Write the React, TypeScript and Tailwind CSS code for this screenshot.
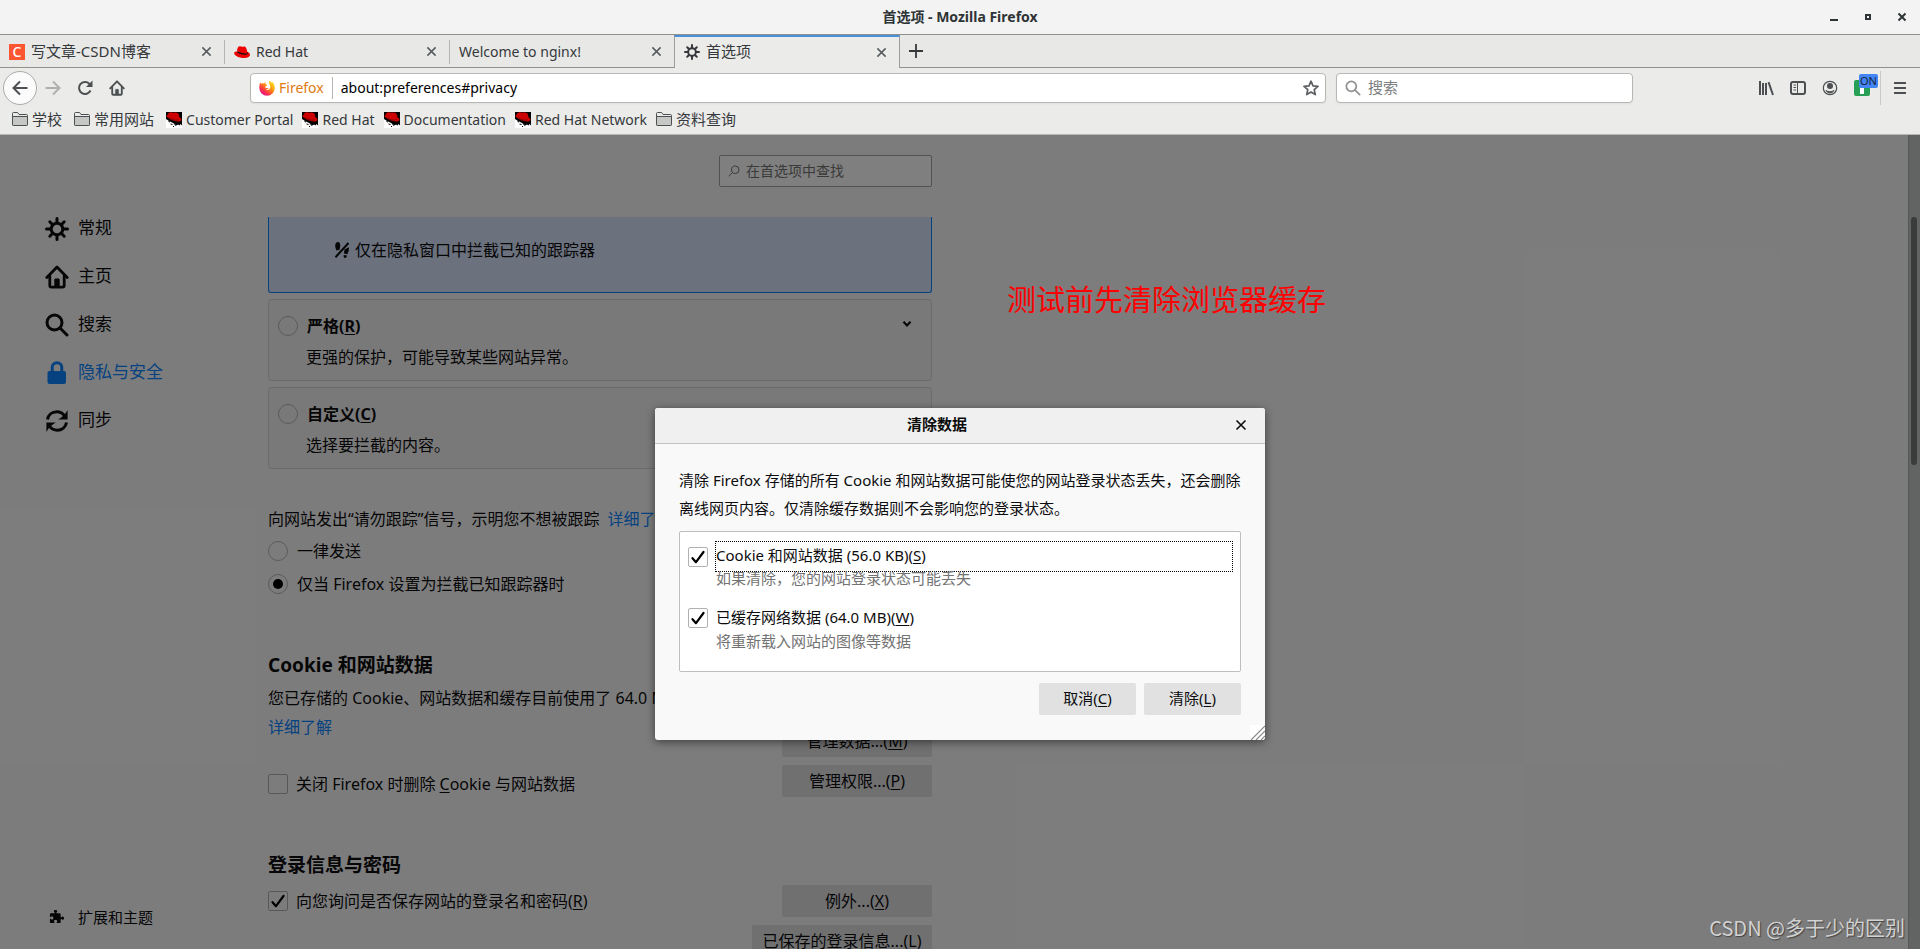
import React from "react";

const CHROME_FONT = "font-['Noto_Sans','Noto_Sans_CJK_SC',sans-serif]";

function Key({ children }: { children: React.ReactNode }) {
  return <span className="underline decoration-1 underline-offset-2">{children}</span>;
}

function CloseIcon({ className = "size-3" }: { className?: string }) {
  return (
    <svg viewBox="0 0 12 12" className={className} fill="none" stroke="currentColor" strokeWidth="1.6">
      <path d="M1.5 1.5l9 9M10.5 1.5l-9 9" />
    </svg>
  );
}

function GearIcon({ className = "" }: { className?: string }) {
  return (
    <svg viewBox="0 0 24 24" className={className} fill="none" stroke="currentColor">
      <circle cx="12" cy="12" r="5.8" strokeWidth="3" />
      <path
        d="M12 1.5v4M12 18.5v4M1.5 12h4M18.5 12h4M4.8 4.8l2.4 2.4M16.8 16.8l2.4 2.4M19.2 4.8l-2.4 2.4M7.2 16.8l-2.4 2.4"
        strokeWidth="3"
        strokeLinecap="round"
      />
    </svg>
  );
}

function HomeIcon({ className = "" }: { className?: string }) {
  return (
    <svg viewBox="0 0 24 24" className={className} fill="none" stroke="currentColor" strokeLinejoin="round" strokeLinecap="round">
      <path d="M1.8 12.5L12 2l10.2 10.5" strokeWidth="2.8" />
      <path d="M4.8 11v9.5a1.6 1.6 0 0 0 1.6 1.6h11.2a1.6 1.6 0 0 0 1.6-1.6V11" strokeWidth="2.8" />
      <path d="M9.6 22v-7.2a1 1 0 0 1 1-1h2.8a1 1 0 0 1 1 1V22z" fill="currentColor" strokeWidth="0.6" />
    </svg>
  );
}

function SearchIcon({ className = "", weight = 3 }: { className?: string; weight?: number }) {
  return (
    <svg viewBox="0 0 24 24" className={className} fill="none" stroke="currentColor" strokeWidth={weight} strokeLinecap="round">
      <circle cx="9.5" cy="9.5" r="7.5" />
      <path d="M15 15l7 7" />
    </svg>
  );
}

function LockIcon({ className = "" }: { className?: string }) {
  return (
    <svg viewBox="0 0 24 24" className={className}>
      <path d="M7.2 12V6.5a4.8 4.8 0 0 1 9.6 0V12" fill="none" stroke="currentColor" strokeWidth="3" />
      <rect x="2.500" y="10" width="18.500" height="13" rx="2" fill="currentColor" />
    </svg>
  );
}

function SyncIcon({ className = "" }: { className?: string }) {
  return (
    <svg viewBox="0 0 24 24" className={className} fill="none" stroke="currentColor" strokeWidth="3">
      <path d="M2.5 10.5C3.3 6 7 2.8 11.8 2.8c3.2 0 5.8 1.5 7.6 3.8" />
      <path d="M21.5 13.5c-.8 4.5-4.5 7.7-9.3 7.7-3.2 0-5.8-1.5-7.6-3.8" />
      <path d="M22.6 1v9.4h-9.4l3.4-2.2 4-4z" fill="currentColor" stroke="none" />
      <path d="M1.4 23v-9.4h9.4l-3.4 2.2-4 4z" fill="currentColor" stroke="none" />
    </svg>
  );
}

function PuzzleIcon({ className = "" }: { className?: string }) {
  return (
    <svg viewBox="0 0 16 16" className={className} fill="currentColor">
      <path d="M14.5 8c-.6 0-.9.8-1.5.8-.3 0-.6-.2-.6-.6V5.6c0-.6-.4-1-1-1H8.6c-.4 0-.6-.3-.6-.6 0-.6.8-.9.8-1.5C8.8 1.5 8 1 7 1s-1.8.5-1.8 1.5c0 .6.8.9.8 1.5 0 .3-.3.6-.6.6H2c-.6 0-1 .4-1 1v2.3c0 .3.2.6.6.6.6 0 .9-.8 1.5-.8 1 0 1.5.8 1.5 1.8s-.5 1.8-1.500 1.8c-.6 0-.9-.8-1.5-.8-.3 0-.6.2-.6.6V14c0 .6.4 1 1 1h3.3c.4 0 .6-.3.6-.6 0-.5-.6-.8-.6-1.4 0-.8.7-1.300 1.700-1.300s1.700.5 1.700 1.300c0 .6-.6.9-.6 1.400 0 .3.3.6.6.6h2.700c.6 0 1-.4 1-1v-2.700c0-.3.3-.6.6-.6.6 0 .9.8 1.500.8 1 0 1.500-.8 1.500-1.700S15.500 8 14.500 8z" />
    </svg>
  );
}

function FolderIcon() {
  return (
    <svg viewBox="0 0 16 16" className="size-4" fill="#c5c7c5" stroke="#4c5052" strokeWidth="1">
      <path d="M.5 13.5V2.5c0-.5.3-1 .9-1h4.2l1.4 2h7.500c.6 0 1 .4 1 1v9c0 .6-.4 1-1 1h-13c-.6 0-1-.4-1-1z" fill="#eaeae9" />
      <path d="M.5 13.5v-8h15v8c0 .6-.4 1-1 1h-13c-.6 0-1-.4-1-1z" />
    </svg>
  );
}

function ShadowmanIcon() {
  return (
    <svg viewBox="0 0 16 16" className="size-4">
      <rect width="16" height="16" fill="#fff" />
      <path d="M0 0h16v13.500l-1.500-1.500-1 1.500-1.500-1-1.500 1L7 11 3 9 0 7z" fill="#000" />
      <path d="M1.500 3C2 1 3.300.2 4.800.3c1.500.2 2.500.7 4 .3 2.200-.5 3.700.4 4.300 2.600l.4 2.300c1.600.6 2.300 1.700 1.800 2.800-.8 1.700-4.500 1.600-7.800.3C4.200 7.300.7 5.400.5 3.700z" fill="#cc0000" />
      <path d="M2.500 5.500c2.500 1.800 6.500 3.200 10 2.400" stroke="#6a0000" strokeWidth=".7" fill="none" />
      <path d="M2.500 9.500l1.500.5M4.500 12l2 .5M8.500 12.500l1.500 1M7 14.500h1" stroke="#000" strokeWidth="1" />
    </svg>
  );
}

function FedoraIcon() {
  return (
    <svg viewBox="0 0 16 16" className="size-4">
      <path d="M2 7.5c-1.300.3-2 .9-1.900 1.700.2 2.300 5 4.800 9.700 4.800 4 0 6.200-1.600 6.200-3.300 0-1.200-.9-2-2.300-2.700z" fill="#e00" />
      <path d="M2.700 7.600c1.300 2.500 8.600 4.400 10.900 2.100.2-.6.1-1.200 0-1.700z" fill="#111" />
      <path d="M3.500 4.400C4 3 4.900 2 6.200 2.300c.7.200 1.200.6 2.100.5 1-.2 1.300-.6 2.300-.2 1.300.5 2 2.300 2.400 3.900l.4 1.700c-.2 1.800-3 1.600-5.300.9C5.700 8.400 3 7 2.900 6.200z" fill="#e00" />
    </svg>
  );
}

function FirefoxIcon() {
  return (
    <svg viewBox="0 0 16 16" className="size-4">
      <defs>
        <linearGradient id="fx" x1="0.85" y1="0.1" x2="0.2" y2="0.9">
          <stop offset="0" stopColor="#ffe226" />
          <stop offset="0.4" stopColor="#ff980e" />
          <stop offset="0.75" stopColor="#ff3647" />
          <stop offset="1" stopColor="#e31587" />
        </linearGradient>
      </defs>
      <path d="M1.2 2.3c.3.7.8 1.2 1.400 1.500.6-.5 1.500-.6 2.300-.4.5-.8 1.300-1.300 2.100-1.500-.6.7-.8 1.400-.7 2 .6.6 2 .4 1.900 1-.2.7-1.400.8-1.600 1.300-.1.7.1 1.100-.2 1.500.6.4 1.500.5 2.200.1.7.1.9.6.7.9-.9.2-1.400.9-2.600.9 1.600 1.200 4.600.2 4.600-2.500 0-2.200-1.300-2.900-1.300-4.600 0-.9.5-1.700 1-2.300.2 1.300 1.100 1.700 2 2.500.2-.3.3-.6.3-1C14.800 3.200 15.800 5.400 15.800 8A7.700 7.700 0 0 1 .3 8c0-2.200.4-3.900.9-5.700z" fill="url(#fx)" />
    </svg>
  );
}

function TabClose() {
  return (
    <button aria-label="关闭标签页" className="flex size-4 items-center justify-center text-[#565a5c]">
      <CloseIcon className="size-[11px]" />
    </button>
  );
}

function Tab({ icon, children }: { icon?: React.ReactNode; children: React.ReactNode }) {
  return (
    <div className="flex w-[225px] items-center border-b border-[#8f918a] pt-px">
      <div className="flex h-6 flex-1 items-center gap-1.5 border-r border-[#b3b5b0] pr-2.5 pl-[9px]">
        {icon}
        <span className="flex-1">{children}</span>
        <TabClose />
      </div>
    </div>
  );
}

function Bookmark({ icon, label }: { icon: React.ReactNode; label: string }) {
  return (
    <a href="#bookmark" className="flex items-center gap-1">
      {icon}
      {label}
    </a>
  );
}

function BookmarkFolder({ label }: { label: string }) {
  return (
    <a href="#folder" className="flex items-center gap-1 pr-[3px] text-[15px]">
      <FolderIcon />
      {label}
    </a>
  );
}

function BrowserChrome() {
  return (
    <header className="shrink-0 text-sm text-[#35393b]">
      <div className="flex h-[34px] items-center bg-[#f3f3f3] px-2.5 font-bold text-[#2e3436]">
        <span className="w-24" />
        <h1 className="flex-1 text-center text-sm">首选项 - Mozilla Firefox</h1>
        <div className="flex w-24 items-center justify-end gap-[18px]">
          <button aria-label="最小化" className="flex size-4 items-center justify-center">
            <svg viewBox="0 0 16 16" className="size-4"><rect x="4" y="10" width="8" height="2" fill="currentColor" /></svg>
          </button>
          <button aria-label="最大化" className="flex size-4 items-center justify-center">
            <svg viewBox="0 0 16 16" className="size-4"><rect x="6" y="6" width="4" height="4" fill="none" stroke="currentColor" strokeWidth="2" /></svg>
          </button>
          <button aria-label="关闭" className="flex size-4 items-center justify-center">
            <svg viewBox="0 0 16 16" className="size-4" fill="none" stroke="currentColor" strokeWidth="2"><path d="M4.5 4.5l7 7M11.5 4.5l-7 7" /></svg>
          </button>
        </div>
      </div>

      <nav aria-label="标签页" className="flex h-[34px] border-t border-[#8f918a] bg-[#e8e8e7]">
        <Tab icon={<span className="flex size-4 items-center justify-center bg-[#fc5531] text-sm font-medium text-white">C</span>}>
          <span className="text-[15px]">写文章-CSDN博客</span>
        </Tab>
        <Tab icon={<FedoraIcon />}>Red Hat</Tab>
        <Tab>Welcome to nginx!</Tab>
        <div className="-ml-px flex w-[226px] items-center gap-1.5 border-x border-t-2 border-[#9c9e98] border-t-[#4a90d9] bg-[#ebebea] pr-2.5 pb-px pl-[9px]">
          <GearIcon className="size-4" />
          <span className="flex-1 text-[15px]">首选项</span>
          <TabClose />
        </div>
        <div className="flex flex-1 items-center border-b border-[#8f918a] pl-[9px]">
          <button aria-label="新建标签页">
            <svg viewBox="0 0 14 14" className="size-3.5" stroke="currentColor" strokeWidth="1.8"><path d="M7 0v14M0 7h14" /></svg>
          </button>
        </div>
      </nav>

      <div className="flex h-10 items-center bg-[#ebebea] pr-3 pl-[3px] text-[#4c5052]">
        <div className="flex w-[247px] items-center">
          <button aria-label="后退" className="flex size-[34px] items-center justify-center rounded-full border border-[#a9aba6] bg-[#fbfbfb]">
            <svg viewBox="0 0 16 16" className="size-4" fill="none" stroke="currentColor" strokeWidth="2"><path d="M15.5 8H1.5M8 1.5L1.5 8 8 14.5" /></svg>
          </button>
          <button aria-label="前进" className="ml-2 text-[#aeb0ae]">
            <svg viewBox="0 0 16 16" className="size-4" fill="none" stroke="currentColor" strokeWidth="2"><path d="M.5 8h14M8 1.5L14.5 8 8 14.5" /></svg>
          </button>
          <button aria-label="刷新" className="ml-4">
            <svg viewBox="0 0 16 16" className="size-4" fill="none" stroke="currentColor" strokeWidth="2">
              <path d="M13.5 10.5A6 6 0 1 1 12.3 3.7L14 5.5" />
              <path d="M15.5.5v6.5H9z" fill="currentColor" stroke="none" />
            </svg>
          </button>
          <button aria-label="主页" className="ml-4"><HomeIcon className="size-4" /></button>
        </div>
        <div className="flex h-[30px] flex-1 items-center rounded-[4px] border border-[#b6b8b3] bg-white pr-1.5 pl-2 shadow-xs">
          <FirefoxIcon />
          <span className="mr-2 ml-1 text-[#e07a10]">Firefox</span>
          <span className="h-[22px] w-px bg-[#b6b8b3]" />
          <input aria-label="地址" defaultValue="about:preferences#privacy" className="ml-2 min-w-0 flex-1 text-black outline-none" />
          <button aria-label="添加书签">
            <svg viewBox="0 0 16 16" className="size-4" fill="none" stroke="#5c6062" strokeWidth="1.7" strokeLinejoin="round">
              <path d="M8 1.2l2 4.6 5 .5-3.8 3.3 1.1 5L8 12l-4.3 2.6 1.1-5L1 6.3l5-.5z" />
            </svg>
          </button>
        </div>
        <label className="ml-2.5 flex h-[30px] w-[297px] items-center gap-[7px] rounded-[4px] border border-[#b6b8b3] bg-white px-2 shadow-xs">
          <SearchIcon className="size-4 text-[#8f9192]" weight={2.6} />
          <input aria-label="搜索" placeholder="搜索" className="min-w-0 flex-1 text-[15px] outline-none placeholder:text-[#7b7e80]" />
        </label>
        <div className="ml-[125px] flex items-center">
          <button aria-label="我的足迹">
            <svg viewBox="0 0 16 16" className="size-4" fill="none" stroke="currentColor" strokeWidth="2"><path d="M2 1v14M5 3v12M8 3v12M10.5 2.2L15 15" /></svg>
          </button>
          <button aria-label="侧栏" className="ml-4">
            <svg viewBox="0 0 16 16" className="size-4" fill="none" stroke="currentColor">
              <rect x="1" y="2" width="14" height="12" rx="2" strokeWidth="2" />
              <path d="M7.5 2v12M3.5 5H6M3.5 7.5H6M3.5 10H6" />
            </svg>
          </button>
          <button aria-label="账户" className="ml-4">
            <svg viewBox="0 0 16 16" className="size-4" fill="none" stroke="currentColor">
              <circle cx="8" cy="8" r="6.7" strokeWidth="1.2" />
              <circle cx="8" cy="6" r="3" fill="currentColor" stroke="none" />
              <path d="M4 10.3c1 1 2.4 1.400 4 1.400s3-.4 4-1.400a4.300 4.300 0 0 1-8 0z" fill="currentColor" />
            </svg>
          </button>
          <button aria-label="扩展" className="relative ml-4">
            <svg viewBox="0 0 16 16" className="size-4">
              <rect width="16" height="16" rx="2" fill="#27a056" />
              <rect x="6" y="7" width="4" height="7" fill="#fff" />
            </svg>
            <span className="absolute -top-1.5 left-[5px] flex h-3.5 w-[19px] items-center justify-center rounded-xs bg-[#4285f4] text-[11px] text-[#17233b]">ON</span>
          </button>
          <span className="ml-2.5 h-[34px] w-px bg-[#c9cac7]" />
          <button aria-label="菜单" className="ml-[11px]">
            <svg viewBox="0 0 16 16" className="size-4" stroke="currentColor" strokeWidth="2"><path d="M2 3h12M2 8h12M2 13h12" /></svg>
          </button>
        </div>
      </div>

      <nav aria-label="书签" className="flex h-[27px] items-center gap-[9px] border-b border-[#b6b8b3] bg-[#ebebea] pb-[3px] pl-3">
        <BookmarkFolder label="学校" />
        <BookmarkFolder label="常用网站" />
        <Bookmark icon={<ShadowmanIcon />} label="Customer Portal" />
        <Bookmark icon={<ShadowmanIcon />} label="Red Hat" />
        <Bookmark icon={<ShadowmanIcon />} label="Documentation" />
        <Bookmark icon={<ShadowmanIcon />} label="Red Hat Network" />
        <BookmarkFolder label="资料查询" />
      </nav>
    </header>
  );
}

function NavItem({ icon, label, active = false }: { icon: React.ReactNode; label: string; active?: boolean }) {
  return (
    <a href="#pane" className={active ? "flex h-12 items-center gap-[9px] text-[#0a84ff]" : "flex h-12 items-center gap-[9px]"}>
      <span className="pt-[2px]">{icon}</span>
      {label}
    </a>
  );
}

function Radio({ name, checked = false }: { name: string; checked?: boolean }) {
  return (
    <span className="grid size-5 shrink-0 place-items-center">
      <input type="radio" name={name} defaultChecked={checked} className="peer col-start-1 row-start-1 size-5 appearance-none rounded-full border border-[#b5b5b7]" />
      <span className="pointer-events-none col-start-1 row-start-1 hidden size-2.5 rounded-full bg-black peer-checked:block" />
    </span>
  );
}

function Check({ checked = false }: { checked?: boolean }) {
  return (
    <span className="grid size-5 shrink-0 place-items-center">
      <input type="checkbox" defaultChecked={checked} className="peer col-start-1 row-start-1 size-5 appearance-none rounded-[2px] border border-[#b1b1b3]" />
      <svg viewBox="0 0 20 20" className="pointer-events-none col-start-1 row-start-1 hidden size-5 peer-checked:block" fill="none" stroke="#000" strokeWidth="2.2" strokeLinecap="round" strokeLinejoin="round">
        <path d="M4.5 11.2l3.5 4L15.500 5" />
      </svg>
    </span>
  );
}

function PaneButton({ children, wide = false }: { children: React.ReactNode; wide?: boolean }) {
  return (
    <button className={wide ? "h-8 w-[180px] rounded-[2px] bg-[#e1e1e2]" : "h-8 w-[150px] rounded-[2px] bg-[#e1e1e2]"}>{children}</button>
  );
}

function PolicyCard({ title, accessKey, text, expandable = false }: { title: string; accessKey: string; text: string; expandable?: boolean }) {
  return (
    <div className="mt-1.5 h-[82px] rounded-[3px] border border-[#d7d7db] bg-[#f3f3f4] pt-2.5 pl-[9px]">
      <div className="flex items-center">
        <label className="flex h-8 flex-1 items-center gap-[9px] font-bold">
          <Radio name="policy" />
          <span>
            {title}(<Key>{accessKey}</Key>)
          </span>
        </label>
        {expandable && (
          <button aria-label="展开" className="mr-[19px] mb-1">
            <svg viewBox="0 0 10 8" className="h-2 w-2.5" fill="none" stroke="currentColor" strokeWidth="2.2"><path d="M1.5 1.8L5 5.5l3.5-3.7" /></svg>
          </button>
        )}
      </div>
      <p className="ml-7 h-[30px] leading-[30px]">{text}</p>
    </div>
  );
}

function Preferences() {
  return (
    <div className="flex h-full bg-[#f9f9fa] text-[#0c0c0d]">
      <aside className="flex w-[268px] shrink-0 flex-col pt-[69px] pl-[45px] text-[17px]">
        <NavItem icon={<GearIcon className="size-6" />} label="常规" />
        <NavItem icon={<HomeIcon className="size-6" />} label="主页" />
        <NavItem icon={<SearchIcon className="size-6" />} label="搜索" />
        <NavItem icon={<LockIcon className="size-6" />} label="隐私与安全" active />
        <NavItem icon={<SyncIcon className="size-6" />} label="同步" />
        <a href="#addons" className="mt-auto mb-[21px] flex items-center gap-3.5 pl-1 text-[15px]">
          <PuzzleIcon className="size-[15px]" />
          扩展和主题
        </a>
      </aside>

      <main className="flex w-[664px] flex-col overflow-hidden text-base">
        <div className="flex h-[82px] shrink-0 justify-end pt-5">
          <label className="flex h-8 w-[213px] items-center gap-1.5 rounded-[2px] border border-[#a5a5a7] bg-white px-2">
            <SearchIcon className="size-3 -scale-x-100 text-[#737373]" weight={2} />
            <input aria-label="在首选项中查找" placeholder="在首选项中查找" className="min-w-0 flex-1 text-sm outline-none placeholder:text-[#757575]" />
          </label>
        </div>
        <div className="min-h-0 flex-1 overflow-hidden">
          <div className="flex h-[76px] items-start rounded-b-[3px] border border-t-0 border-[#0a84ff] bg-[#d7e3fb] pt-[21px] pl-[65px]">
            <span className="flex items-center gap-[5px]">
              <svg viewBox="0 0 16 16" className="size-4" fill="currentColor">
                <path d="M3.8 0C5.7 0 6.5 2 6.2 4.5L5.6 7.8 2.5 8.5C1.5 6.5 1 4.3 1.3 2.7 1.6 1 2.5 0 3.8 0zM14.9 5.2C15.2 8 14.4 10.5 13.2 12.2l-3.2-.7.4-4z" />
                <path d="M9.7 13l3.3.6c-.2 1.5-1 2.4-2 2.4-1.1 0-1.6-1.3-1.3-3z" />
                <path d="M14.5 1L1.5 15.2" stroke="currentColor" strokeWidth="2" />
              </svg>
              仅在隐私窗口中拦截已知的跟踪器
            </span>
          </div>
          <PolicyCard title="严格" accessKey="R" text="更强的保护，可能导致某些网站异常。" expandable />
          <PolicyCard title="自定义" accessKey="C" text="选择要拦截的内容。" />

          <p className="mt-9 h-7 leading-7">
            向网站发出“请勿跟踪”信号，示明您不想被跟踪
            <a href="#dnt" className="ml-2 text-[#0a84ff]">详细了解</a>
          </p>
          <div className="mt-[2px] flex flex-col gap-px">
            <label className="flex h-8 items-center gap-[9px]">
              <Radio name="dnt" />
              一律发送
            </label>
            <label className="flex h-8 items-center gap-[9px]">
              <Radio name="dnt" checked />
              仅当 Firefox 设置为拦截已知跟踪器时
            </label>
          </div>

          <h2 className="mt-[51px] h-7 text-[19px] leading-7 font-bold">Cookie 和网站数据</h2>
          <p className="mt-[5px] leading-[29px]">
            您已存储的 Cookie、网站数据和缓存目前使用了 64.0 MB 磁盘空间。
            <br />
            <a href="#storage" className="text-[#0a84ff]">详细了解</a>
          </p>
          <div className="-mt-[17px] flex items-end justify-between">
            <label className="mb-[3px] flex h-5 items-center gap-2">
              <Check />
              <span>
                关闭 Firefox 时删除 <Key>C</Key>ookie 与网站数据
              </span>
            </label>
            <div className="flex flex-col gap-2">
              <PaneButton>管理数据...(<Key>M</Key>)</PaneButton>
              <PaneButton>管理权限...(<Key>P</Key>)</PaneButton>
            </div>
          </div>

          <h2 className="mt-[54px] h-7 text-[19px] leading-7 font-bold">登录信息与密码</h2>
          <div className="mt-[6px] flex items-start justify-between">
            <label className="mt-[6px] flex h-5 items-center gap-2">
              <Check checked />
              <span>
                向您询问是否保存网站的登录名和密码(<Key>R</Key>)
              </span>
            </label>
            <div className="flex flex-col items-end gap-2">
              <PaneButton>例外...(<Key>X</Key>)</PaneButton>
              <PaneButton wide>已保存的登录信息...(<Key>L</Key>)</PaneButton>
            </div>
          </div>
        </div>
      </main>

      <div className="ml-auto w-3 border-l border-[#adafae] bg-[#c4c8c6] pt-[82px]">
        <div className="ml-[2px] h-[248px] w-1.5 rounded-full bg-[#747877]" />
      </div>
    </div>
  );
}

function ClearDataDialog() {
  return (
    <section
      role="dialog"
      aria-label="清除数据"
      className="absolute top-[273px] left-1/2 flex w-[610px] -translate-x-1/2 flex-col overflow-hidden rounded-[3px] bg-[#f9f9fa] text-[15px] text-[#0c0c0d] shadow-[0_2px_8px_rgba(0,0,0,0.5)]"
    >
      <div className="flex h-9 items-center border-b border-[#c1c1c1] bg-[#f0f0f0] pr-[18px] pb-[2px]">
        <h2 className="flex-1 pr-4 text-center font-bold">清除数据</h2>
        <button aria-label="关闭对话框"><CloseIcon className="size-3" /></button>
      </div>
      <div className="px-6 pt-[22px] pb-[25px]">
        <p className="leading-7">
          清除 Firefox 存储的所有 Cookie 和网站数据可能使您的网站登录状态丢失，还会删除离线网页内容。仅清除缓存数据则不会影响您的登录状态。
        </p>
        <div className="mt-[9px] h-[141px] rounded-[2px] border border-[#bebebf] bg-white pt-[9px] pr-[7px] pl-2">
          <label className="flex items-center gap-[7px]">
            <Check checked />
            <span className="h-[31px] flex-1 border border-dotted border-black leading-[27px]">
              Cookie 和网站数据 (56.0 KB)(<Key>S</Key>)
            </span>
          </label>
          <p className="-mt-1 ml-7 h-5 leading-5 text-[#737373]">如果清除，您的网站登录状态可能丢失</p>
          <label className="mt-3.5 flex h-[31px] items-center gap-2">
            <Check checked />
            <span>
              已缓存网络数据 (64.0 MB)(<Key>W</Key>)
            </span>
          </label>
          <p className="-mt-[2px] ml-7 h-5 leading-5 text-[#737373]">将重新载入网站的图像等数据</p>
        </div>
        <div className="mt-[11px] flex justify-end gap-2">
          <button className="h-8 w-[97px] rounded-[2px] bg-[#e1e1e2] pb-[2px]">取消(<Key>C</Key>)</button>
          <button className="h-8 w-[97px] rounded-[2px] bg-[#e1e1e2] pb-[2px]">清除(<Key>L</Key>)</button>
        </div>
      </div>
      <svg viewBox="0 0 15 15" className="absolute right-0 bottom-0 size-[15px]">
        <rect width="15" height="15" fill="#fff" />
        <path d="M1 15L15 1M6 15l9-9M11 15l4-4" stroke="#8a8a8a" strokeWidth="1.2" />
      </svg>
    </section>
  );
}

export default function App() {
  return (
    <div className={`flex h-screen flex-col overflow-hidden ${CHROME_FONT}`}>
      <BrowserChrome />
      <div className="relative min-h-0 flex-1 overflow-hidden">
        <Preferences />
        <div className="absolute inset-0 bg-black/50" />
        <ClearDataDialog />
        <p className="absolute top-[141px] left-[1007px] font-['Noto_Sans_CJK_SC',sans-serif] text-[29px] leading-11 text-[#ff0000]">
          测试前先清除浏览器缓存
        </p>
        <p className="absolute right-[15px] bottom-1.5 font-['Noto_Sans_CJK_SC',sans-serif] text-xl leading-[30px] text-[#d2d2d2] [text-shadow:1px_1px_1px_#444]">
          CSDN @多于少的区别
        </p>
      </div>
    </div>
  );
}
